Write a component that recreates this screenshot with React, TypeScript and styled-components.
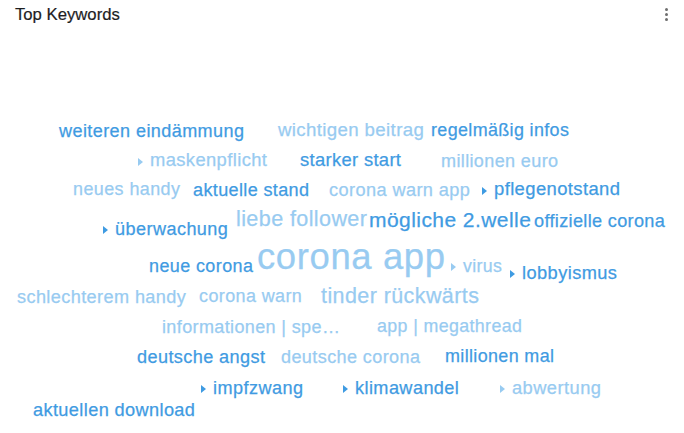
import React from "react";
import styled, { createGlobalStyle } from "styled-components";

const GlobalStyle = createGlobalStyle`
  html, body { margin: 0; padding: 0; background: #ffffff; }
  body { font-family: "Liberation Sans", Arial, sans-serif; }
`;

const HEADER_H = 32;
const FONT = '"Liberation Sans", Arial, sans-serif';

type Tone = "dark" | "light";
interface WordDef {
  text: string;
  x: number; // left of the text itself
  w: number; // visual width of the text
  base: number; // baseline y in page coords
  tone: Tone;
  arrow?: boolean;
  scale?: number;
}

const WORDS: WordDef[] = [
  { text: "weiteren eindämmung", x: 59, w: 185, base: 137, tone: "dark" },
  { text: "wichtigen beitrag", x: 278, w: 146, base: 137, tone: "light" },
  { text: "regelmäßig infos", x: 431, w: 138, base: 137, tone: "dark" },
  { text: "maskenpflicht", x: 150, w: 117, base: 167, tone: "light", arrow: true },
  { text: "starker start", x: 300, w: 101, base: 167, tone: "dark" },
  { text: "millionen euro", x: 441, w: 117, base: 167, tone: "light" },
  { text: "neues handy", x: 73, w: 107, base: 196, tone: "light" },
  { text: "aktuelle stand", x: 193, w: 116, base: 196, tone: "dark" },
  { text: "corona warn app", x: 329, w: 141, base: 196, tone: "light" },
  { text: "pflegenotstand", x: 494, w: 126, base: 196, tone: "dark", arrow: true },
  { text: "überwachung", x: 115, w: 113, base: 235, tone: "dark", arrow: true },
  { text: "liebe follower", x: 236, w: 131, base: 227, tone: "light" },
  { text: "mögliche 2.welle", x: 369, w: 162, base: 227, tone: "dark" },
  { text: "offizielle corona", x: 534, w: 131, base: 227, tone: "dark" },
  { text: "neue corona", x: 149, w: 104, base: 273, tone: "dark" },
  { text: "corona app", x: 257, w: 188, base: 270, tone: "light", scale: 0.97 },
  { text: "virus", x: 463, w: 39, base: 273, tone: "light", arrow: true },
  { text: "lobbyismus", x: 522, w: 95, base: 279, tone: "dark", arrow: true },
  { text: "schlechterem handy", x: 17, w: 169, base: 303, tone: "light" },
  { text: "corona warn", x: 199, w: 103, base: 303, tone: "light" },
  { text: "tinder rückwärts", x: 321, w: 158, base: 304, tone: "light" },
  { text: "informationen | spe…", x: 162, w: 178, base: 333, tone: "light" },
  { text: "app | megathread", x: 377, w: 145, base: 333, tone: "light" },
  { text: "deutsche angst", x: 137, w: 128, base: 363, tone: "dark" },
  { text: "deutsche corona", x: 281, w: 139, base: 363, tone: "light" },
  { text: "millionen mal", x: 445, w: 109, base: 363, tone: "dark" },
  { text: "impfzwang", x: 213, w: 90, base: 394, tone: "dark", arrow: true },
  { text: "klimawandel", x: 355, w: 104, base: 394, tone: "dark", arrow: true },
  { text: "abwertung", x: 512, w: 89, base: 394, tone: "light", arrow: true },
  { text: "aktuellen download", x: 33, w: 162, base: 416, tone: "dark" },
];

const ARROW_W = 5;
const ARROW_GAP = 7;

let ctx: CanvasRenderingContext2D | null = null;
function measure(text: string, size: number): number {
  if (typeof document === "undefined") return text.length * size * 0.5;
  if (!ctx) ctx = document.createElement("canvas").getContext("2d");
  if (!ctx) return text.length * size * 0.5;
  ctx.font = `${size}px ${FONT}`;
  return ctx.measureText(text).width;
}

const Panel = styled.div`
  width: 684px;
  height: 433px;
  display: flex;
  flex-direction: column;
  background: #ffffff;
  overflow: hidden;
`;

const Header = styled.header`
  height: ${HEADER_H}px;
  flex: none;
  display: flex;
  align-items: center;
  justify-content: space-between;
  padding: 0 14px 0 15px;
  box-sizing: border-box;
`;

const Title = styled.h2`
  margin: 0;
  font-family: ${FONT};
  font-weight: 400;
  font-size: 16.7px;
  color: #1d1d1f;
  line-height: 1;
  padding-bottom: 2px;
  -webkit-text-stroke: 0.2px #1d1d1f;
`;

const MenuButton = styled.button`
  border: none;
  background: transparent;
  padding: 0;
  width: 8px;
  height: 18px;
  display: flex;
  flex-direction: column;
  align-items: center;
  justify-content: center;
  gap: 2px;
  margin-bottom: 3px;
  cursor: pointer;
`;

const Dot = styled.span`
  width: 3px;
  height: 3px;
  border-radius: 50%;
  background: #6e6e6e;
`;

const Cloud = styled.div`
  position: relative;
  flex: 1;
`;

const toneColor = (t: Tone) => (t === "dark" ? "#3f9be2" : "#98cbf1");

const Word = styled.span<{ $tone: Tone }>`
  position: absolute;
  display: inline-block;
  white-space: nowrap;
  font-family: ${FONT};
  line-height: 1;
  color: ${(p) => toneColor(p.$tone)};
  -webkit-text-stroke: 0.25px ${(p) => toneColor(p.$tone)};
`;

const Arrow = styled.span<{ $tone: Tone }>`
  display: inline-block;
  vertical-align: middle;
  width: 0;
  height: 0;
  border-top: 4px solid transparent;
  border-bottom: 4px solid transparent;
  border-left: ${ARROW_W}px solid ${(p) => toneColor(p.$tone)};
  margin-right: ${ARROW_GAP}px;
  letter-spacing: 0;
`;

const Label = styled.span``;

function CloudWord({ def }: { def: WordDef }) {
  const ref = 20;
  const m = measure(def.text, ref) / ref; // width per px of font-size
  const raw = def.w / m;
  const fs = raw * (def.scale ?? 0.96);
  const n = Math.max(1, [...def.text].length - 1);
  const ls = (def.w - m * fs) / n;
  const top = def.base - HEADER_H - 0.8465 * fs;
  const left = def.arrow ? def.x - ARROW_W - ARROW_GAP : def.x;
  return (
    <Word $tone={def.tone} style={{ left, top, fontSize: fs }}>
      {def.arrow && <Arrow $tone={def.tone} />}
      <Label style={{ letterSpacing: ls }}>{def.text}</Label>
    </Word>
  );
}

export default function App() {
  return (
    <>
      <GlobalStyle />
      <Panel>
        <Header>
          <Title>Top Keywords</Title>
          <MenuButton aria-label="More options">
            <Dot />
            <Dot />
            <Dot />
          </MenuButton>
        </Header>
        <Cloud>
          {WORDS.map((w) => (
            <CloudWord key={w.text} def={w} />
          ))}
        </Cloud>
      </Panel>
    </>
  );
}
